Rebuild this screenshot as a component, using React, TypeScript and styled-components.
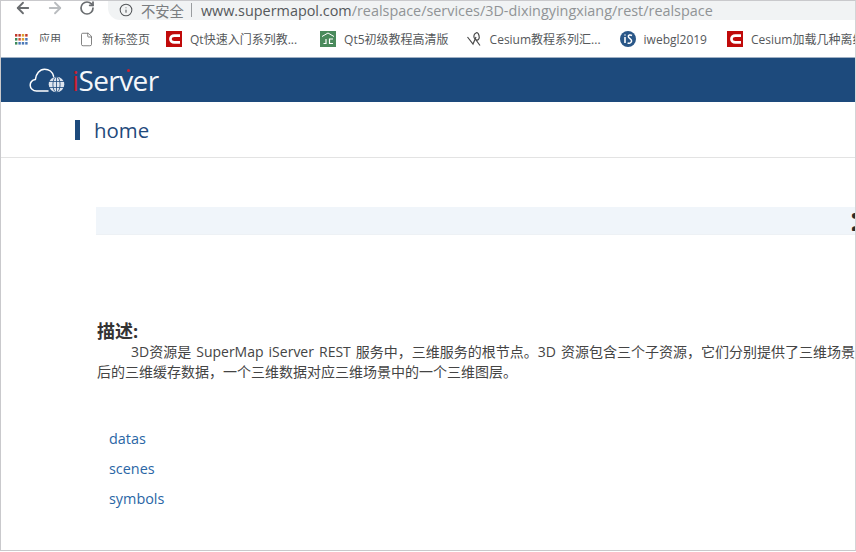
import React from "react";
import styled, { createGlobalStyle } from "styled-components";
import { ArrowLeft, ArrowRight, File, Info, RotateCw } from "lucide-react";

const FONT = `"Open Sans", "Noto Sans", "Noto Sans CJK SC", sans-serif`;

const GlobalStyle = createGlobalStyle`
  html, body {
    margin: 0;
    padding: 0;
    background: #fff;
    overflow: hidden;
  }
`;

const Frame = styled.div`
  box-sizing: border-box;
  width: 856px;
  height: 551px;
  border: 1px solid #c9c9cc;
  border-right-color: #d4d4d6;
  font-family: ${FONT};
  overflow: hidden;
  background: #fff;
`;

const AddressRow = styled.div`
  display: flex;
  height: 20px;
  align-items: flex-start;
  color: #6d7073;
`;

const NavIcons = styled.div`
  display: flex;
  width: 107px;
  flex: none;
  padding-left: 13px;
  gap: 14px;
  box-sizing: border-box;
`;

const NavButton = styled.span<{ $dim?: boolean }>`
  display: flex;
  width: 18px;
  height: 14px;
  align-items: center;
  justify-content: center;
  color: ${(p) => (p.$dim ? "#b9bcbf" : "#6a6d70")};
`;

const AddressPill = styled.div`
  flex: 1;
  display: flex;
  align-items: center;
  height: 20px;
  margin-top: -1px;
  padding-left: 11px;
  background: #f1f3f4;
  border-bottom-left-radius: 12px;
  white-space: nowrap;
  overflow: hidden;
`;

const NotSecure = styled.span`
  margin-left: 8px;
  font-size: 14.3px;
  color: #7a7d80;
`;

const Divider = styled.span`
  width: 1px;
  height: 14px;
  margin: 0 9px 0 7px;
  background: #9a9da0;
`;

const Url = styled.span`
  font-size: 14.4px;
  color: #909396;
`;

const UrlHost = styled.span`
  color: #55585b;
`;

const BookmarkBar = styled.div`
  display: flex;
  align-items: center;
  height: 36px;
  padding-left: 14px;
  white-space: nowrap;
  overflow: hidden;
  border-bottom: 1px solid #9fb0c4;
`;

const Bookmark = styled.div<{ $gap: number }>`
  display: flex;
  align-items: center;
  flex: none;
  gap: 8px;
  margin-right: ${(p) => p.$gap}px;
  font-size: 12px;
  color: #55585b;
`;

const AppsLabel = styled.span`
  display: block;
  height: 9px;
  line-height: 11px;
  overflow: hidden;
  margin: 0 0 4px 3px;
  font-size: 11px;
`;

const Header = styled.header`
  display: flex;
  align-items: center;
  height: 44px;
  padding-left: 28px;
  background: #1d4a7c;
`;

const Logo = styled.div`
  display: flex;
  align-items: center;
  gap: 6px;
`;

const LogoText = styled.span`
  position: relative;
  font-size: 28px;
  font-weight: 400;
  line-height: 44px;
  letter-spacing: -0.6px;
  color: #f4f7fa;
`;

const LogoMark = styled.span`
  color: #c8202f;
`;

const LogoDot = styled.span`
  position: absolute;
  left: 55px;
  top: 11px;
  width: 3px;
  height: 3px;
  border-radius: 50%;
  background: #c8202f;
`;

const TitleBar = styled.div`
  display: flex;
  align-items: center;
  height: 55px;
  padding-left: 74px;
  border-bottom: 1px solid #e3e3e3;
`;

const TitleMarker = styled.span`
  width: 5px;
  height: 20px;
  margin-right: 14px;
  background: #1d4a7c;
`;

const Title = styled.h1`
  margin: 0;
  font-size: 20.4px;
  font-weight: 400;
  color: #1f4a7c;
`;

const Content = styled.main`
  padding: 49px 0 0 95px;
`;

const Banner = styled.div`
  display: flex;
  justify-content: flex-end;
  align-items: flex-start;
  height: 27px;
  background: #f0f5fa;
  border-bottom: 1px solid #edf1f5;
  overflow: hidden;
`;

const BannerGlyph = styled.span`
  width: 5px;
  overflow: hidden;
  font-size: 34px;
  line-height: 24px;
  font-weight: 700;
  color: #2b2b2b;
`;

const DescLabel = styled.h2`
  margin: 85px 0 0 1px;
  font-size: 18px;
  line-height: 22px;
  font-weight: 700;
  color: #333;
`;

const DescText = styled.p`
  margin: 0 0 0 1px;
  font-size: 14px;
  line-height: 20px;
  word-spacing: 1.4px;
  color: #444;
  white-space: nowrap;
`;

const Indent = styled.span`
  display: inline-block;
  width: 34px;
`;

const LinkList = styled.ul`
  list-style: none;
  margin: 42px 0 0;
  padding: 0 0 0 13px;
`;

const LinkItem = styled.li`
  font-size: 14.4px;
  line-height: 30px;
`;

const ResourceLink = styled.a`
  color: #2a66a5;
  text-decoration: none;
`;

const AppsIcon = () => (
  <svg width="13" height="11" viewBox="0 0 13 11">
    {[
      "#c0392b", "#c0392b", "#e0a030", "#c0392b",
      "#3c8a5a", "#c8503c", "#e0a030", "#4a78b8",
      "#3c8a5a", "#4a78b8", "#4a78b8", "#4a78b8",
    ].map((c, i) => (
      <rect key={i} x={(i % 4) * 3.4} y={Math.floor(i / 4) * 4} width="2.4" height="2.6" fill={c} />
    ))}
  </svg>
);

const RedCIcon = () => (
  <svg width="16" height="16" viewBox="0 0 16 16">
    <rect width="16" height="16" fill="#c00a0a" />
    <path d="M14 4.6H8.2C6 4.6 4.4 6 4.4 8s1.6 3.4 3.8 3.4H14" fill="none" stroke="#fff" strokeWidth="2.6" />
  </svg>
);

const GreenIcon = () => (
  <svg width="16" height="16" viewBox="0 0 16 16">
    <rect width="16" height="16" fill="#4a8a5c" />
    <path d="M2 5.5 8 2l6 3.5" fill="none" stroke="#fff" strokeWidth="1" />
    <path d="M6 8v4.5H3.5M13 8H9.5v4.5H13" fill="none" stroke="#fff" strokeWidth="1.2" />
  </svg>
);

const CesiumIcon = () => (
  <svg width="15" height="16" viewBox="0 0 15 16">
    <path d="M0.5 6 6 13 9 6M9 2C6.5 3 6 7 8.5 8.5S13 8 12 4.5 9.5 1.5 9 2ZM9 9l4 5.5" fill="none" stroke="#4a4a4a" strokeWidth="1.2" />
  </svg>
);

const IsIcon = () => (
  <svg width="16" height="16" viewBox="0 0 16 16">
    <circle cx="8" cy="8" r="8" fill="#2a5788" />
    <path d="M5 6v6" stroke="#fff" strokeWidth="1.6" />
    <path d="M5 3.6v.8" stroke="#fff" strokeWidth="1.6" />
    <path d="M12 4.5C10 3.4 8 4 8.4 5.8S12 8 11.6 10.2 9 12.6 7.6 11.8" fill="none" stroke="#fff" strokeWidth="1.5" />
  </svg>
);

const CloudLogo = () => (
  <svg width="37" height="27" viewBox="0 0 37 27">
    <path
      d="M19 24H7.5C4 24 1.2 21.4 1.2 18.2c0-3 2.3-5.3 5.2-5.8C7 7 10.5 2.2 15.6 2.2c4.4 0 8 3 9 7"
      fill="none"
      stroke="#fff"
      strokeWidth="1.5"
      strokeLinecap="round"
    />
    <circle cx="27.5" cy="17.5" r="7.8" fill="#dfe6ef" />
    <g fill="none" stroke="#1d4a7c" strokeWidth="0.8">
      <ellipse cx="27.5" cy="17.5" rx="3.6" ry="7.8" />
      <path d="M27.5 9.7v15.6M20 14.5h15M20 20.5h15" />
    </g>
  </svg>
);

const bookmarks = [
  { icon: <File size={15} strokeWidth={1.3} color="#666" />, label: "新标签页", gap: 16 },
  { icon: <RedCIcon />, label: "Qt快速入门系列教...", gap: 23 },
  { icon: <GreenIcon />, label: "Qt5初级教程高清版", gap: 18 },
  { icon: <CesiumIcon />, label: "Cesium教程系列汇...", gap: 19 },
  { icon: <IsIcon />, label: "iwebgl2019", gap: 20 },
  { icon: <RedCIcon />, label: "Cesium加载几种离线影像", gap: 0 },
];

const resources = ["datas", "scenes", "symbols"];

export default function App() {
  return (
    <Frame>
      <GlobalStyle />
      <AddressRow>
        <NavIcons>
          <NavButton><ArrowLeft size={18} strokeWidth={2.4} /></NavButton>
          <NavButton $dim><ArrowRight size={18} strokeWidth={2.4} /></NavButton>
          <NavButton><RotateCw size={16} strokeWidth={2.6} /></NavButton>
        </NavIcons>
        <AddressPill>
          <Info size={14} strokeWidth={1.8} color="#55585b" />
          <NotSecure>不安全</NotSecure>
          <Divider />
          <Url><UrlHost>www.supermapol.com</UrlHost>/realspace/services/3D-dixingyingxiang/rest/realspace</Url>
        </AddressPill>
      </AddressRow>
      <BookmarkBar>
        <Bookmark $gap={18}>
          <AppsIcon />
          <AppsLabel>应用</AppsLabel>
        </Bookmark>
        {bookmarks.map((b) => (
          <Bookmark key={b.label} $gap={b.gap}>
            {b.icon}
            <span>{b.label}</span>
          </Bookmark>
        ))}
      </BookmarkBar>
      <Header>
        <Logo>
          <CloudLogo />
          <LogoText>
            <LogoMark>i</LogoMark>Server
            <LogoDot />
          </LogoText>
        </Logo>
      </Header>
      <TitleBar>
        <TitleMarker />
        <Title>home</Title>
      </TitleBar>
      <Content>
        <Banner><BannerGlyph>:</BannerGlyph></Banner>
        <DescLabel>描述:</DescLabel>
        <DescText>
          <Indent />3D资源是 SuperMap iServer REST 服务中，三维服务的根节点。3D 资源包含三个子资源，它们分别提供了三维场景
          <br />
          后的三维缓存数据，一个三维数据对应三维场景中的一个三维图层。
        </DescText>
        <LinkList>
          {resources.map((name) => (
            <LinkItem key={name}>
              <ResourceLink href="#">{name}</ResourceLink>
            </LinkItem>
          ))}
        </LinkList>
      </Content>
    </Frame>
  );
}
